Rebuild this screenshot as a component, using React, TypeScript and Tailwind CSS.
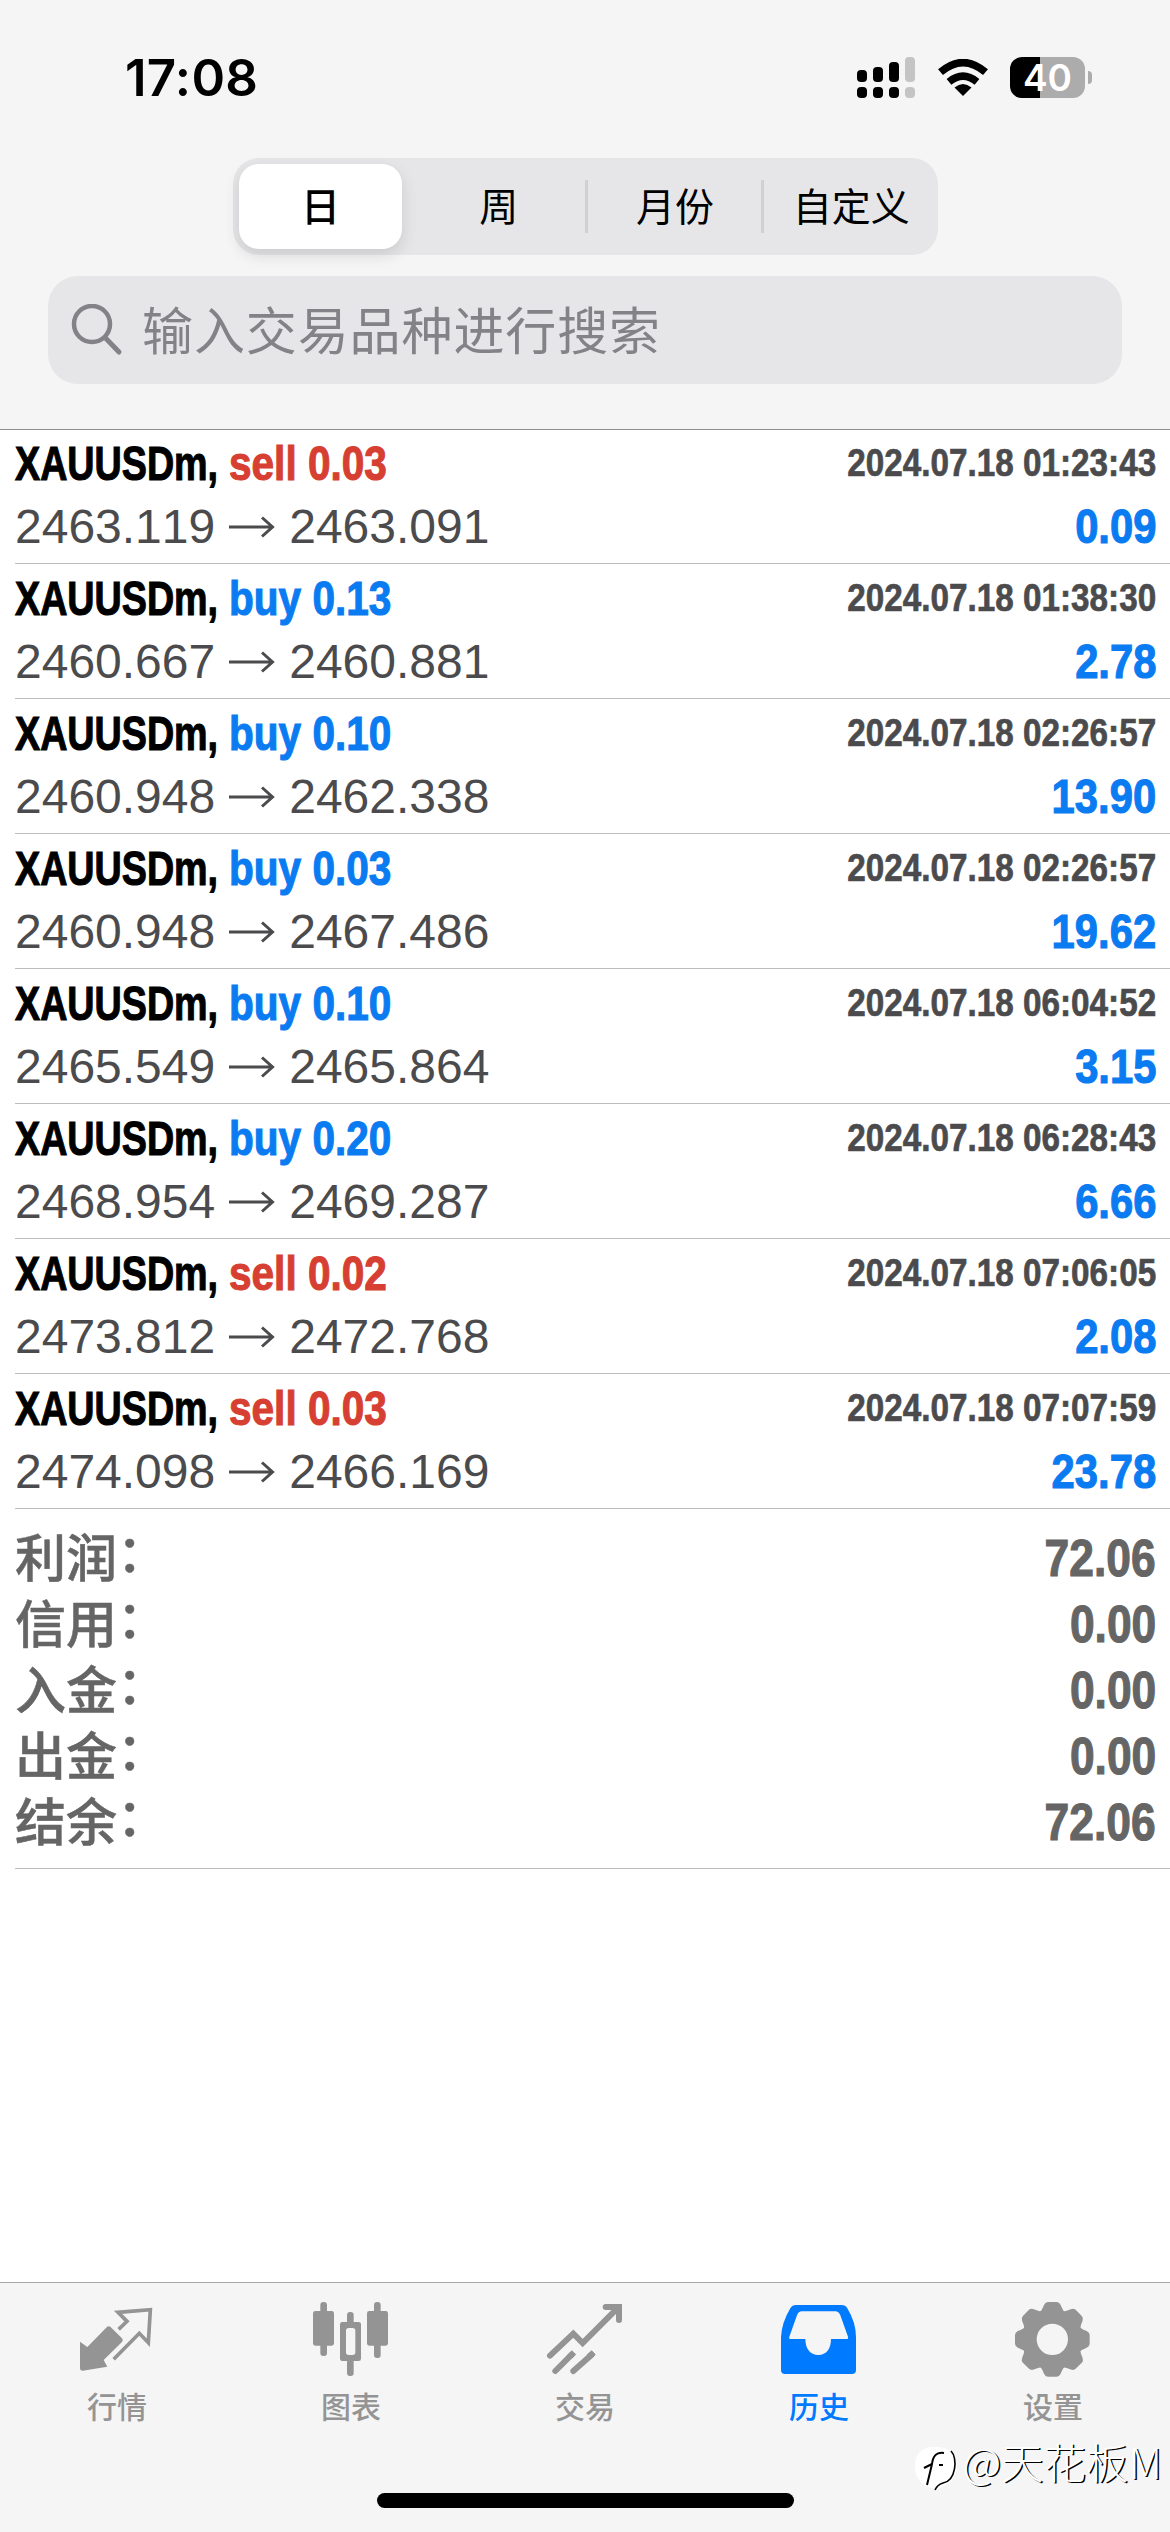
import { ReactNode } from "react";

type Deal = {
    symbol: string,
    side: 'buy' | 'sell',
    volume: string,
    open: string,
    close: string,
    time: string,
    profit: string
}

const deals: Deal[] = [
    { symbol: 'XAUUSDm', side: 'sell', volume: '0.03', open: '2463.119', close: '2463.091', time: '2024.07.18 01:23:43', profit: '0.09' },
    { symbol: 'XAUUSDm', side: 'buy', volume: '0.13', open: '2460.667', close: '2460.881', time: '2024.07.18 01:38:30', profit: '2.78' },
    { symbol: 'XAUUSDm', side: 'buy', volume: '0.10', open: '2460.948', close: '2462.338', time: '2024.07.18 02:26:57', profit: '13.90' },
    { symbol: 'XAUUSDm', side: 'buy', volume: '0.03', open: '2460.948', close: '2467.486', time: '2024.07.18 02:26:57', profit: '19.62' },
    { symbol: 'XAUUSDm', side: 'buy', volume: '0.10', open: '2465.549', close: '2465.864', time: '2024.07.18 06:04:52', profit: '3.15' },
    { symbol: 'XAUUSDm', side: 'buy', volume: '0.20', open: '2468.954', close: '2469.287', time: '2024.07.18 06:28:43', profit: '6.66' },
    { symbol: 'XAUUSDm', side: 'sell', volume: '0.02', open: '2473.812', close: '2472.768', time: '2024.07.18 07:06:05', profit: '2.08' },
    { symbol: 'XAUUSDm', side: 'sell', volume: '0.03', open: '2474.098', close: '2466.169', time: '2024.07.18 07:07:59', profit: '23.78' }
]

const summary = [
    { label: '利润', value: '72.06' },
    { label: '信用', value: '0.00' },
    { label: '入金', value: '0.00' },
    { label: '出金', value: '0.00' },
    { label: '结余', value: '72.06' }
]

const periods = ['日', '周', '月份', '自定义']

const StatusBar = () => (
    <div className="flex h-[158px] items-start justify-between pl-[125px] pr-[78px]">
        <span className="mt-[48px] font-['Inter',sans-serif] text-[51px] font-semibold leading-[60px] tracking-[0.3px] text-black">17:08</span>
        <div className="mt-[57px] flex items-start">
            <svg className="h-[42px] w-[58px]" viewBox="0 0 58 42">
                <g fill="#000">
                    <rect x="0" y="13" width="10" height="12" rx="4" />
                    <rect x="16" y="10" width="10" height="15" rx="4" />
                    <rect x="32" y="5" width="10" height="20" rx="4" />
                    <rect x="0" y="30" width="10" height="11" rx="4" />
                    <rect x="16" y="30" width="10" height="11" rx="4" />
                    <rect x="32" y="30" width="10" height="11" rx="4" />
                </g>
                <g fill="#c4c4c4">
                    <rect x="48" y="0" width="10" height="25" rx="4" />
                    <rect x="48" y="30" width="10" height="11" rx="4" />
                </g>
            </svg>
            <svg className="ml-[22px] mt-[2px] h-[38px] w-[52px]" viewBox="0 0 52 38">
                <path d="M26 37 L17.5 28.5 Q26 21.5 34.5 28.5 Z" />
                <path d="M12 22.8 Q26 11.5 40 22.8" fill="none" stroke="#000" strokeWidth="7.5" />
                <path d="M3.5 13.2 Q26 -6 48.5 13.2" fill="none" stroke="#000" strokeWidth="7.5" />
            </svg>
            <div className="ml-[21px] flex items-center">
                <div className="flex h-[41px] w-[75px] items-center justify-center rounded-[12px] bg-linear-to-r from-black from-40% to-[#acacac] to-40%">
                    <span className="font-['Inter',sans-serif] text-[37px] font-semibold leading-[41px] text-white">40</span>
                </div>
                <div className="ml-[3px] h-[13px] w-[4px] rounded-r-full bg-[#acacac]" />
            </div>
        </div>
    </div>
)

const PeriodTabs = () => (
    <div className="mx-auto grid h-[97px] w-[705px] grid-cols-4 rounded-[26px] bg-[#e6e6e8] font-['Noto_Sans_CJK_SC',sans-serif] text-[39px] leading-none text-black">
        {periods.map((period, index) => (
            <div key={period} className="relative flex items-center justify-center">
                {index === 0 ? (
                    <div className="flex h-[85px] w-[163px] items-center justify-center rounded-[20px] bg-white shadow-[0_6px_16px_rgba(0,0,0,0.12)]">
                        <span className="mb-[4px] font-medium">{period}</span>
                    </div>
                ) : (
                    <span className="mb-[4px] ml-[4px]">{period}</span>
                )}
                {index > 1 && <div className="absolute left-0 top-[22px] h-[53px] w-[3px] bg-[#d0d0d3]" />}
            </div>
        ))}
    </div>
)

const SearchField = () => (
    <div className="mx-[48px] mt-[21px] flex h-[108px] items-center rounded-[30px] bg-[#e6e6e8] text-[#838387]">
        <svg className="ml-[23px] h-[52px] w-[52px]" viewBox="0 0 52 52" fill="none" stroke="currentColor" strokeWidth="4.5" strokeLinecap="round">
            <circle cx="21" cy="20" r="18" />
            <path d="M34 33.5 L48 48" strokeWidth="5" />
        </svg>
        <span className="mb-[4px] ml-[19px] font-['Noto_Sans_CJK_SC',sans-serif] text-[51px] leading-none tracking-[0.9px]">输入交易品种进行搜索</span>
    </div>
)

const DealRow = ({ deal }: { deal: Deal }) => (
    <li className="ml-[15px] flex h-[135px] flex-col whitespace-nowrap border-b border-[#bdbdbf] pr-[14px] pt-[7px] font-['Liberation_Sans',sans-serif] text-[48px] leading-[54px] [font-kerning:none]">
        <div className="flex h-[54px] justify-between font-bold [-webkit-text-stroke:1.1px]">
            <p className="flex pt-px">
                <span className="w-[214px] origin-left scale-x-[0.785] text-black">{deal.symbol},</span>
                <span className={`origin-left scale-x-[0.845] ${deal.side === 'buy' ? 'text-[#0a7bf0]' : 'text-[#d63f31]'}`}>{deal.side} {deal.volume}</span>
            </p>
            <p className="origin-right scale-x-[0.853] text-[39px] text-[#4b4b4d] [-webkit-text-stroke:0.7px]">{deal.time}</p>
        </div>
        <div className="mt-[10px] flex h-[54px] justify-between">
            <p className="flex items-center text-[#4b4b4d]">
                {deal.open}
                <svg className="ml-[14px] mr-[14px] h-[22px] w-[46px]" viewBox="0 0 46 22" fill="none" stroke="currentColor" strokeWidth="3">
                    <path d="M0 11 H43 M33 1.5 L43.5 11 L33 20.5" />
                </svg>
                {deal.close}
            </p>
            <p className="origin-right scale-x-[0.87] font-bold text-[#0a7bf0] [-webkit-text-stroke:1.1px]">{deal.profit}</p>
        </div>
    </li>
)

const Summary = () => (
    <dl className="ml-[15px] h-[360px] border-b border-[#bdbdbf] pr-[14px] pt-[16px] text-[51px] text-[#656565]">
        {summary.map((item) => (
            <div key={item.label} className="flex h-[66px] justify-between">
                <dt className="-mt-[3px] flex font-['Noto_Sans_CJK_SC',sans-serif] font-medium leading-[66px] [-webkit-text-stroke:0.5px]">
                    {item.label}
                    <span className="-mt-[5px]">：</span>
                </dt>
                <dd className="mt-px origin-right scale-x-[0.87] font-['Liberation_Sans',sans-serif] font-bold leading-[66px] [-webkit-text-stroke:1.1px]">{item.value}</dd>
            </div>
        ))}
    </dl>
)

const QuotesIcon = () => (
    <>
        <path d="M6 125 L28 141 L86 82 Q91 76 97 80 L132 115 Q137 120 132 126 L77 180 L88 200 L14 212 Q6 212 6 204 Z" fill="currentColor" />
        <path d="M122 88 L147 64 L120 37 L217 29 L211 128 L184 100 L107 178" fill="none" stroke="currentColor" strokeWidth="11" />
    </>
)

const ChartIcon = () => (
    <g fill="currentColor">
        <rect x="25" y="6" width="20" height="162" rx="9" />
        <rect x="3" y="33" width="63" height="104" rx="7" />
        <rect x="105" y="36" width="20" height="40" rx="9" />
        <rect x="105" y="178" width="20" height="50" rx="9" />
        <path d="M91 66 H140 Q147 66 147 73 V176 Q147 183 140 183 H91 Q84 183 84 176 V73 Q84 66 91 66 Z M110 84 Q102 84 102 92 V157 Q102 165 110 165 H122 Q130 165 130 157 V92 Q130 84 122 84 Z" fillRule="evenodd" />
        <rect x="186" y="6" width="20" height="168" rx="9" />
        <rect x="165" y="33" width="63" height="104" rx="7" />
    </g>
)

const TradeIcon = () => (
    <g fill="none" stroke="currentColor" strokeWidth="18">
        <path d="M12 167 L82 101 L110 129 L214 25" strokeLinecap="round" />
        <path d="M179 21 H219 V60" strokeLinecap="round" />
        <path d="M77 164 L28 213 M137 164 L82 213" strokeLinecap="round" />
        <path d="M84 157 L70 171 M143 157 L128 171" />
    </g>
)

const HistoryIcon = () => (
    <path
        d="M48 15 H185 Q196 15 202 25 Q228 68 228 112 V210 Q228 222 216 222 H15 Q3 222 3 210 V112 Q5 68 31 25 Q37 15 48 15 Z M32 117 H76 C76 145 90 165 115 165 C140 165 153 145 153 117 H199 Q206 117 204 110 L181 46 Q176 34 166 34 H66 Q55 34 51 46 L28 110 Q26 117 32 117 Z"
        fill="currentColor"
        fillRule="evenodd"
    />
)

const SettingsIcon = () => (
    <g transform="translate(115 118)">
        <circle r="69" fill="none" stroke="currentColor" strokeWidth="44" />
        {[0, 45, 90, 135, 180, 225, 270, 315].map((angle) => (
            <path key={angle} transform={`rotate(${angle})`} d="M-38 -80 Q-32 -86 -25 -103 Q-21 -112 -13 -112 H13 Q21 -112 25 -103 Q32 -86 38 -80 Z" fill="currentColor" />
        ))}
    </g>
)

const tabs: { label: string, icon: ReactNode, active?: boolean }[] = [
    { label: '行情', icon: <QuotesIcon /> },
    { label: '图表', icon: <ChartIcon /> },
    { label: '交易', icon: <TradeIcon /> },
    { label: '历史', icon: <HistoryIcon />, active: true },
    { label: '设置', icon: <SettingsIcon /> }
]

const TabBar = () => (
    <nav className="relative h-[250px] border-t border-[#a9a9ab] bg-[#f5f5f5]">
        <div className="grid grid-cols-5 pt-[17px]">
            {tabs.map((tab) => (
                <div key={tab.label} className={`flex flex-col items-center ${tab.active ? 'text-[#007aff]' : 'text-[#949494]'}`}>
                    <svg className="h-[78px] w-[78px]" viewBox="0 0 234 234">{tab.icon}</svg>
                    <span className="mt-[9px] font-['Noto_Sans_CJK_SC',sans-serif] text-[30px] font-medium leading-[36px]">{tab.label}</span>
                </div>
            ))}
        </div>
        <div className="mx-auto mt-[70px] h-[15px] w-[417px] rounded-full bg-black" />
        <Signature />
    </nav>
)

const Signature = () => (
    <div className="absolute right-[8px] top-[154px] flex items-start text-white">
        <svg className="mt-[7px] h-[50px] w-[48px]" viewBox="0 0 48 50">
            <path d="M18 3 C34 2 43 9 43 21 C43 34 36 40 24 45 C10 44 1 36 1 22 C1 10 7 4 18 3 Z" fill="#fff" />
            <path d="M37 7 C44 14 42 37 29 39 Q23 41 21 46" fill="none" stroke="#000" strokeWidth="1.6" />
            <path d="M30 9 C22 8 19 12 18 20 L13 41 M10 24 L18 20 M25 21 H29" fill="none" stroke="#000" strokeWidth="2" />
        </svg>
        <span className="font-['Noto_Sans_CJK_SC',sans-serif] text-[42.5px] font-light leading-[48px] [text-shadow:1.5px_1px_0_#000]">@天花板M</span>
    </div>
)

export default function App() {
    return (
        <main className="flex h-[2532px] w-[1170px] flex-col bg-white">
            <header className="relative h-[430px] border-b border-[#8e8e90] bg-[#f5f5f5]">
                <StatusBar />
                <PeriodTabs />
                <SearchField />
            </header>
            <ul className="-mt-px">
                {deals.map((deal) => (
                    <DealRow key={deal.time + deal.volume} deal={deal} />
                ))}
            </ul>
            <Summary />
            <div className="flex-1" />
            <TabBar />
        </main>
    )
}
